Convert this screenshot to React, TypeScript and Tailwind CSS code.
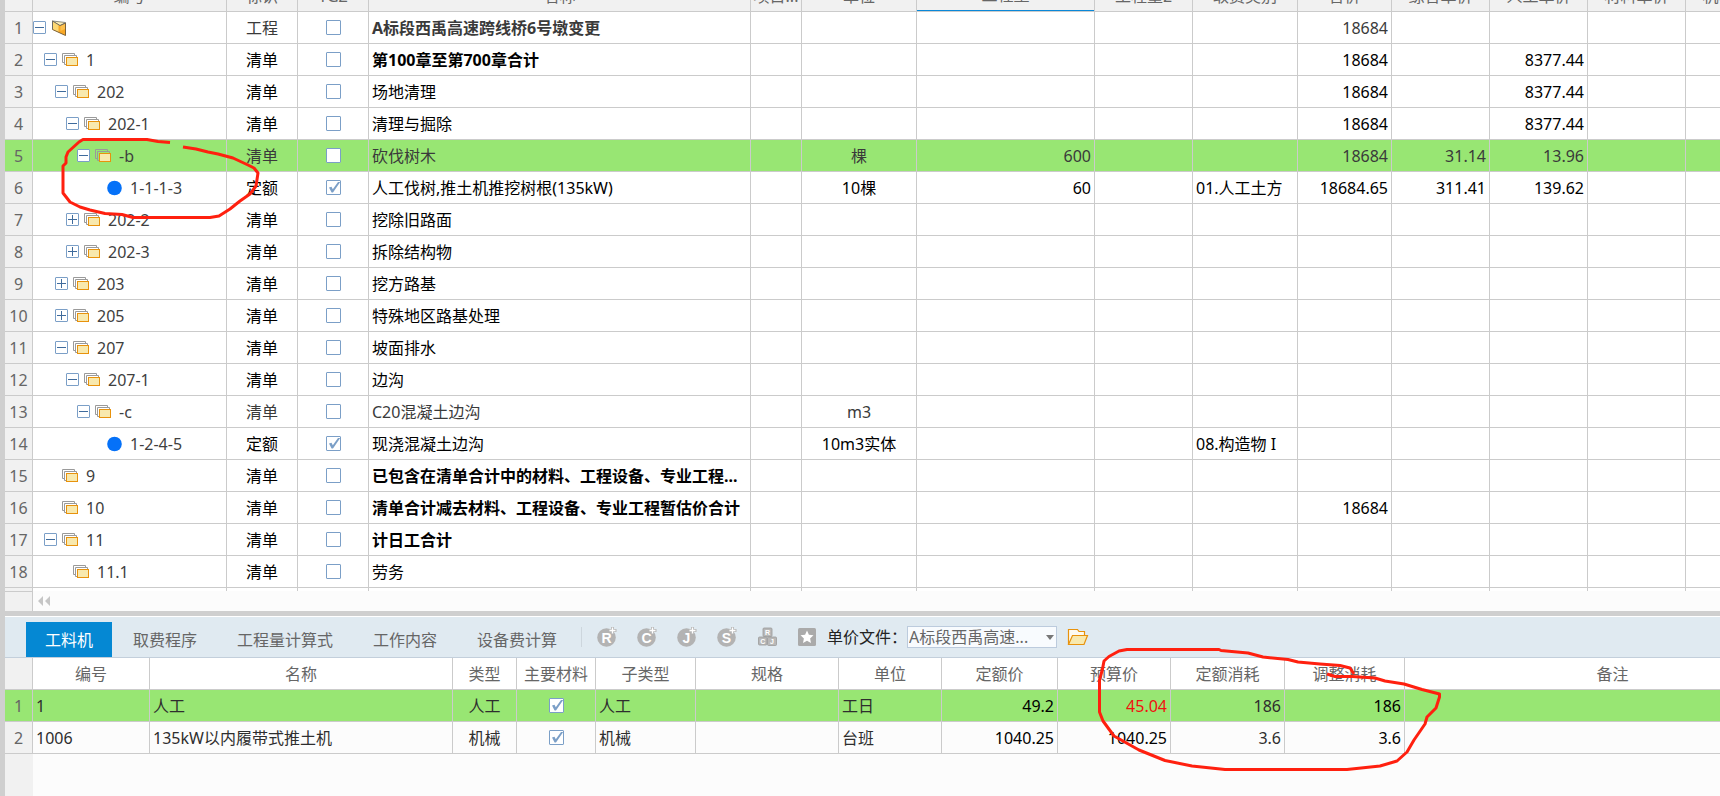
import type { ReactNode } from "react";

type Icon = "book" | "stack" | "dot";

type Item = {
  level: number;
  toggle?: "-" | "+";
  icon: Icon;
  code: string;
  kind: string;
  checked?: boolean;
  name: string;
  bold?: boolean;
  soft?: boolean;
  unit?: string;
  qty?: string;
  fee?: string;
  total?: string;
  price?: string;
  labor?: string;
};

const items: Item[] = [
  { level: 0, toggle: "-", icon: "book", code: "", kind: "工程", name: "A标段西禹高速跨线桥6号墩变更", bold: true, soft: true, total: "18684" },
  { level: 1, toggle: "-", icon: "stack", code: "1", kind: "清单", name: "第100章至第700章合计", bold: true, total: "18684", labor: "8377.44" },
  { level: 2, toggle: "-", icon: "stack", code: "202", kind: "清单", name: "场地清理", total: "18684", labor: "8377.44" },
  { level: 3, toggle: "-", icon: "stack", code: "202-1", kind: "清单", name: "清理与掘除", total: "18684", labor: "8377.44" },
  { level: 4, toggle: "-", icon: "stack", code: "-b", kind: "清单", name: "砍伐树木", soft: true, unit: "棵", qty: "600", total: "18684", price: "31.14", labor: "13.96" },
  { level: 5, icon: "dot", code: "1-1-1-3", kind: "定额", checked: true, name: "人工伐树,推土机推挖树根(135kW)", unit: "10棵", qty: "60", fee: "01.人工土方", total: "18684.65", price: "311.41", labor: "139.62" },
  { level: 3, toggle: "+", icon: "stack", code: "202-2", kind: "清单", name: "挖除旧路面" },
  { level: 3, toggle: "+", icon: "stack", code: "202-3", kind: "清单", name: "拆除结构物" },
  { level: 2, toggle: "+", icon: "stack", code: "203", kind: "清单", name: "挖方路基" },
  { level: 2, toggle: "+", icon: "stack", code: "205", kind: "清单", name: "特殊地区路基处理" },
  { level: 2, toggle: "-", icon: "stack", code: "207", kind: "清单", name: "坡面排水" },
  { level: 3, toggle: "-", icon: "stack", code: "207-1", kind: "清单", name: "边沟" },
  { level: 4, toggle: "-", icon: "stack", code: "-c", kind: "清单", name: "C20混凝土边沟", soft: true, unit: "m3" },
  { level: 5, icon: "dot", code: "1-2-4-5", kind: "定额", checked: true, name: "现浇混凝土边沟", unit: "10m3实体", fee: "08.构造物 I" },
  { level: 1, icon: "stack", code: "9", kind: "清单", name: "已包含在清单合计中的材料、工程设备、专业工程...", bold: true },
  { level: 1, icon: "stack", code: "10", kind: "清单", name: "清单合计减去材料、工程设备、专业工程暂估价合计", bold: true, total: "18684" },
  { level: 1, toggle: "-", icon: "stack", code: "11", kind: "清单", name: "计日工合计", bold: true },
  { level: 2, icon: "stack", code: "11.1", kind: "清单", name: "劳务" },
];

const itemColumns = [
  { title: "", width: "w-[28px]" },
  { title: "编号", width: "w-[194px]" },
  { title: "标识", width: "w-[71px]" },
  { title: "YGZ", width: "w-[71px]" },
  { title: "名称", width: "w-[382px]" },
  { title: "项目...", width: "w-[51px]" },
  { title: "单位", width: "w-[115px]" },
  { title: "工程量", width: "w-[178px]" },
  { title: "工程量2", width: "w-[98px]" },
  { title: "取费类别", width: "w-[105px]" },
  { title: "合价", width: "w-[94px]" },
  { title: "综合单价", width: "w-[98px]" },
  { title: "人工单价", width: "w-[98px]" },
  { title: "材料单价", width: "w-[98px]" },
  { title: "机械单价", width: "w-[98px]" },
];

const resourceColumns = [
  { title: "", width: "w-[28px]" },
  { title: "编号", width: "w-[117px]" },
  { title: "名称", width: "w-[303px]" },
  { title: "类型", width: "w-[64px]" },
  { title: "主要材料", width: "w-[79px]" },
  { title: "子类型", width: "w-[100px]" },
  { title: "规格", width: "w-[143px]" },
  { title: "单位", width: "w-[103px]" },
  { title: "定额价", width: "w-[116px]" },
  { title: "预算价", width: "w-[113px]" },
  { title: "定额消耗", width: "w-[114px]" },
  { title: "调整消耗", width: "w-[120px]" },
  { title: "备注", width: "w-[416px]" },
];

const resources = [
  { code: "1", name: "人工", type: "人工", unit: "工日", base: "49.2", budget: "45.04", changed: true, quota: "186", adjusted: "186" },
  { code: "1006", name: "135kW以内履带式推土机", type: "机械", unit: "台班", base: "1040.25", budget: "1040.25", changed: false, quota: "3.6", adjusted: "3.6" },
];

const tabs = ["工料机", "取费程序", "工程量计算式", "工作内容", "设备费计算"];

const indents = ["pl-0", "pl-[11px]", "pl-[22px]", "pl-[33px]", "pl-[44px]", "pl-[55px]"];

function Cell({ className = "", children }: { className?: string; children?: ReactNode }) {
  return (
    <td className={`h-8 overflow-hidden border-r border-b border-[#cbcbcb] px-[3px] whitespace-nowrap ${className}`}>
      {children}
    </td>
  );
}

function CheckBox({ checked, label }: { checked?: boolean; label: string }) {
  return (
    <label className="mx-auto grid size-[15px]">
      <input
        type="checkbox"
        defaultChecked={checked}
        aria-label={label}
        className="peer col-start-1 row-start-1 size-[15px] appearance-none rounded-[1px] border border-[#7b9fc7] bg-white"
      />
      <svg viewBox="0 0 15 15" className="pointer-events-none invisible col-start-1 row-start-1 size-[15px] peer-checked:visible">
        <path d="M3 7.5 5.5 6.8l1.300 2.500L12 2h2.200L7 12.500H5.600Z" fill="#7b9fc7" />
      </svg>
    </label>
  );
}

function Toggle({ sign }: { sign: "-" | "+" }) {
  return (
    <button type="button" aria-label={sign === "-" ? "折叠" : "展开"} className="size-[13px]">
      <svg viewBox="0 0 13 13" className="size-[13px]">
        <rect x="0.5" y="0.5" width="12" height="12" rx="0.5" fill="#fff" stroke="#7b9fc7" />
        <path d={sign === "-" ? "M2 6.5h9" : "M2 6.5h9M6.5 2v9"} stroke="#3f6b9c" />
      </svg>
    </button>
  );
}

function ItemIcon({ icon }: { icon: Icon }) {
  if (icon === "book") {
    return (
      <svg viewBox="0 0 16 16" className="size-4">
        <path d="M1.500 1 14.500 2.500 9 6Z" fill="#fdf0b8" stroke="#8b8b80" />
        <path d="M1.500 1 9 5.500 14.500 3V15.500L1.500 9.500Z" fill="#f9a825" />
        <path d="M1.500 1 7.500 4.800V12L1.500 9.500Z" fill="#fcd873" />
        <path d="M9.500 6 14 4V9L9.500 11Z" fill="#fdc14f" />
        <path d="M1.500 9.500V1L9 5.500 14.500 3" fill="none" stroke="#6b6a62" />
        <path d="M14.500 3V15.500L1.500 9.500" fill="none" stroke="#7d6238" />
      </svg>
    );
  }
  if (icon === "dot") {
    return (
      <svg viewBox="0 0 16 16" className="size-4">
        <circle cx="8.5" cy="8" r="7.3" fill="#0571f8" />
      </svg>
    );
  }
  return (
    <svg viewBox="0 0 16 14" className="h-[14px] w-4">
      <path d="M2 9.5H.5v-9h12V2" fill="none" stroke="#9a9a9a" />
      <path d="M4 11.5H2.500v-9h12V4" fill="none" stroke="#9a9a9a" />
      <rect x="4.500" y="4.500" width="11" height="8" fill="#f8e9ae" stroke="#e8920c" />
    </svg>
  );
}

function HeaderRow({ columns, className }: { columns: { title: string; width: string }[]; className: string }) {
  return (
    <tr>
      {columns.map((column, i) => (
        <th
          key={i}
          scope="col"
          className={`h-8 overflow-hidden border-r border-b border-[#cbcbcb] font-normal whitespace-nowrap text-[#666] ${column.width} ${i === 0 ? "bg-[#f1f1f1]" : className}`}
        >
          {column.title === "工程量" ? (
            <div className="flex h-[31px] items-center justify-center border-b border-[#0a88d8]">{column.title}</div>
          ) : (
            column.title
          )}
        </th>
      ))}
    </tr>
  );
}

function ItemTable() {
  return (
    <div className="overflow-hidden">
      <table className="-mt-5 w-[1779px] table-fixed border-separate border-spacing-0 bg-white">
        <thead>
          <HeaderRow columns={itemColumns} className="bg-[#f1f1f1]" />
        </thead>
        <tbody>
          {items.map((item, i) => {
            const selected = i === 4;
            const tone = item.soft ? "text-[#3a3a3a]" : "text-black";
            return (
              <tr key={i} className={`${selected ? "bg-[#98e673]" : "bg-white"} ${tone}`}>
                <Cell className={`text-center text-[#666] ${selected ? "" : "bg-[#f1f1f1]"}`}>{i + 1}</Cell>
                <Cell className="pl-0 text-[#3f3f3f]">
                  <div className={`flex items-center ${indents[item.level]}`}>
                    <span className="mr-[5px] flex w-[13px]">{item.toggle && <Toggle sign={item.toggle} />}</span>
                    <span className="mr-2 flex w-4">
                      <ItemIcon icon={item.icon} />
                    </span>
                    {item.code}
                  </div>
                </Cell>
                <Cell className="text-center">{item.kind}</Cell>
                <Cell>
                  <CheckBox checked={item.checked} label={`YGZ ${i + 1}`} />
                </Cell>
                <Cell className={item.bold ? "font-bold" : ""}>{item.name}</Cell>
                <Cell />
                <Cell className="text-center">{item.unit}</Cell>
                <Cell className="text-right">{item.qty}</Cell>
                <Cell />
                <Cell>{item.fee}</Cell>
                <Cell className="text-right">{item.total}</Cell>
                <Cell className="text-right">{item.price}</Cell>
                <Cell className="text-right">{item.labor}</Cell>
                <Cell />
                <Cell />
              </tr>
            );
          })}
          <tr>
            {itemColumns.map((_, i) => (
              <td key={i} className={`h-[3px] border-r border-[#cbcbcb] ${i === 0 ? "bg-[#f1f1f1]" : ""}`} />
            ))}
          </tr>
        </tbody>
      </table>
      <div className="flex h-5 bg-[#fcfcfc]">
        <div className="w-[28px] border-t border-r border-[#cbcbcb] bg-[#f1f1f1]" />
        <button type="button" aria-label="向左滚动" className="ml-[5px]">
          <svg viewBox="0 0 12 10" className="h-[10px] w-3">
            <path d="M5 0v10L0 5ZM12 0v10L7 5Z" fill="#c6c6c6" />
          </svg>
        </button>
      </div>
    </div>
  );
}

function BadgeButton({ letter, label }: { letter: string; label: string }) {
  return (
    <button type="button" aria-label={label} className="size-5">
      <svg viewBox="0 0 20 20" className="size-5">
        <circle cx="9.500" cy="10.500" r="9.300" fill="#b3b3b3" />
        <text x="9.500" y="15.500" textAnchor="middle" fontSize="14" fontWeight="700" fill="#fff" fontFamily="Liberation Sans, sans-serif">
          {letter}
        </text>
        <path d="M15.500 0v7M12 3.500h7.500" stroke="#b8b8b8" strokeWidth="3" />
        <path d="M15.500 .5v6M12.500 3.500h6" stroke="#fff" strokeWidth="1.300" />
      </svg>
    </button>
  );
}

function Toolbar() {
  return (
    <div className="flex h-[41px] border-b border-[#c3cfdb] bg-[#e0eaf1] pl-[21px]">
      <div role="tablist" className="flex gap-[2px] pt-[5px]">
        {tabs.map((tab, i) => (
          <button
            key={tab}
            type="button"
            role="tab"
            aria-selected={i === 0}
            className={`h-[35px] px-[19px] whitespace-nowrap ${i === 0 ? "bg-[#0588d3] text-white" : "text-[#666]"}`}
          >
            {tab}
          </button>
        ))}
      </div>
      <div className="mt-[10px] ml-[5px] h-5 w-px bg-[#cdd6dd]" />
      <div className="ml-[15px] flex h-10 items-center">
        <div className="flex items-center gap-5">
          <BadgeButton letter="R" label="增加人工" />
          <BadgeButton letter="C" label="增加材料" />
          <BadgeButton letter="J" label="增加机械" />
          <BadgeButton letter="S" label="增加设备" />
          <button type="button" aria-label="工料机分类" className="size-5">
            <svg viewBox="0 0 20 20" className="size-5">
              <g fill="#b8b8b8" stroke="#9a9a9a" strokeWidth="0.8">
                <rect x="6" y="1" width="9" height="8.500" rx="1" />
                <rect x="1.500" y="10" width="8.500" height="8" rx="1" />
                <rect x="10.500" y="10" width="9" height="8.500" rx="1" />
              </g>
              <g fontSize="7" fontWeight="700" fill="#fff" textAnchor="middle" fontFamily="Liberation Sans, sans-serif">
                <text x="10.500" y="8">R</text>
                <text x="5.700" y="16.500">C</text>
                <text x="15" y="17">J</text>
              </g>
            </svg>
          </button>
          <button type="button" aria-label="收藏" className="size-5">
            <svg viewBox="0 0 20 20" className="size-5">
              <rect x="1" y="1" width="18" height="18" rx="1.500" fill="#aaa" />
              <path d="m10 3.500 1.900 4.300 4.600.5-3.400 3.100.9 4.600-4-2.300L6 16l.9-4.600-3.400-3.100 4.600-.5Z" fill="#fff" />
            </svg>
          </button>
        </div>
        <label htmlFor="price-file" className="ml-[10px] w-20 whitespace-nowrap text-[#222]">
          单价文件：
        </label>
        <div className="grid items-center">
          <select
            id="price-file"
            className="col-start-1 row-start-1 h-[22px] w-[150px] appearance-none border border-[#bccbdd] bg-[#f8fbfe] pl-px leading-5 text-[#666]"
          >
            <option>A标段西禹高速...</option>
          </select>
          <svg viewBox="0 0 8 5" className="pointer-events-none col-start-1 row-start-1 mr-[3px] h-[5px] w-2 justify-self-end">
            <path d="M0 0h8L4 5Z" fill="#777" />
          </svg>
        </div>
        <button type="button" aria-label="打开文件" className="ml-[10px] h-[18px] w-[22px]">
          <svg viewBox="0 0 22 18" className="h-[18px] w-[22px]">
            <path d="M1.500 16V1.500h9l1.500 2h5.500V7" fill="#fdfaf0" stroke="#e8920c" strokeWidth="1.200" />
            <path d="M1.500 16.500 5.500 7.500H20.500L17 16.500Z" fill="#f8e9ae" stroke="#e8920c" strokeWidth="1.200" />
          </svg>
        </button>
      </div>
    </div>
  );
}

function ResourceTable() {
  return (
    <div className="overflow-hidden">
      <table className="w-[1816px] table-fixed border-separate border-spacing-0">
        <thead>
          <HeaderRow columns={resourceColumns} className="bg-white" />
        </thead>
        <tbody>
          {resources.map((row, i) => (
            <tr key={row.code} className={`text-[#2e2e2e] ${i === 0 ? "bg-[#98e673]" : "bg-[#fcfcfc]"}`}>
              <Cell className={`text-center text-[#666] ${i === 0 ? "" : "bg-[#f1f1f1]"}`}>{i + 1}</Cell>
              <Cell>{row.code}</Cell>
              <Cell>{row.name}</Cell>
              <Cell className="text-center">{row.type}</Cell>
              <Cell>
                <CheckBox checked label={`主要材料 ${row.name}`} />
              </Cell>
              <Cell>{row.type}</Cell>
              <Cell />
              <Cell>{row.unit}</Cell>
              <Cell className="text-right text-black">{row.base}</Cell>
              <Cell className={`text-right ${row.changed ? "text-[#f01010]" : "text-black"}`}>{row.budget}</Cell>
              <Cell className="text-right">{row.quota}</Cell>
              <Cell className="text-right text-black">{row.adjusted}</Cell>
              <Cell />
            </tr>
          ))}
        </tbody>
      </table>
    </div>
  );
}

// Hand-drawn pen marks that float over both grids
function PenMarks() {
  return (
    <svg
      viewBox="0 0 1720 796"
      className="pointer-events-none absolute top-0 left-0 h-[796px] w-[1720px]"
      fill="none"
      stroke="#ff200f"
      strokeWidth="3"
      strokeLinejoin="round"
    >
      <path d="M170 142.500 158 141.500 147 139.500H83L79 142 68 152 66 157V163L63 166V193L70 202 80 207 90 210 105 213.500 122 214.500 133 217.500H210L219 216 230 209 240 201 250 194 256 186 258 173 254 168 248 165 233 158 218 154 208 152 196 149 183 147" />
      <path d="M1354 674 1350 668 1340 665.500 1320 664 1298 662 1288 659.500 1263 657 1248 653 1221 650.500 1219 649.500H1127L1119 651 1109 656.500 1104 661 1102.500 669 1099.500 680V712L1103 721 1114 736 1139 750 1165 760.500 1192 766 1225 769.500H1347L1380 766 1397 761 1407 752 1414 740 1425 724 1427 717 1436 708 1439.500 697V694L1422 689.500 1404 684 1385 681 1375 678 1352 676.500H1335L1327 674" />
    </svg>
  );
}

export default function App() {
  return (
    <div className="relative flex min-h-screen overflow-hidden bg-[#fcfcfc] font-['Noto_Sans','Noto_Sans_CJK_SC',sans-serif] text-[16px] leading-6">
      <div className="w-[5px] shrink-0 bg-[#cfcfcf]" />
      <main className="flex min-w-0 flex-1 flex-col">
        <ItemTable />
        <div className="h-[6px] border-b border-white bg-[#cfcfcf]" />
        <Toolbar />
        <ResourceTable />
        <div className="w-[28px] flex-1 bg-[#f1f1f1]" />
      </main>
      <PenMarks />
    </div>
  );
}
